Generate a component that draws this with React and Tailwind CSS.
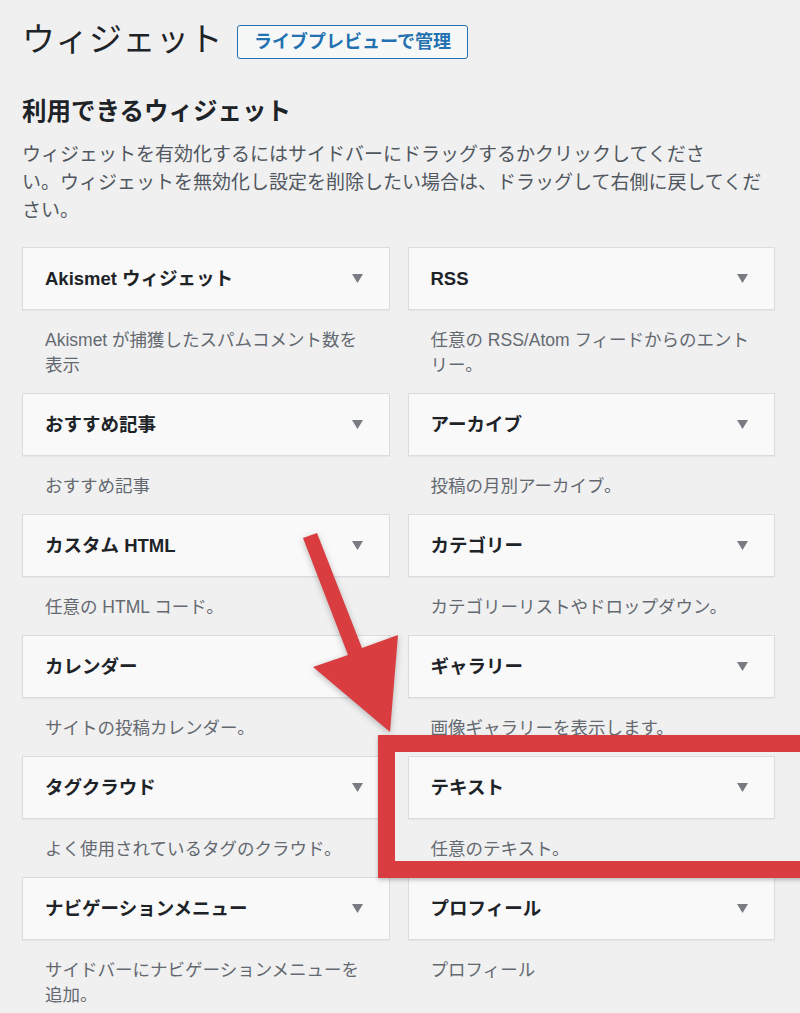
import React from "react";

const widgets = [
  { title: "Akismet ウィジェット", desc: ["Akismet が捕獲したスパムコメント数を", "表示"] },
  { title: "RSS", desc: ["任意の RSS/Atom フィードからのエント", "リー。"] },
  { title: "おすすめ記事", desc: ["おすすめ記事"] },
  { title: "アーカイブ", desc: ["投稿の月別アーカイブ。"] },
  { title: "カスタム HTML", desc: ["任意の HTML コード。"] },
  { title: "カテゴリー", desc: ["カテゴリーリストやドロップダウン。"] },
  { title: "カレンダー", desc: ["サイトの投稿カレンダー。"] },
  { title: "ギャラリー", desc: ["画像ギャラリーを表示します。"] },
  { title: "タグクラウド", desc: ["よく使用されているタグのクラウド。"] },
  { title: "テキスト", desc: ["任意のテキスト。"] },
  { title: "ナビゲーションメニュー", desc: ["サイドバーにナビゲーションメニューを", "追加。"] },
  { title: "プロフィール", desc: ["プロフィール"] },
];

function WidgetItem({ widget }) {
  return (
    <div>
      {/* widget header bar */}
      <div className="flex h-[63px] items-center justify-between border border-[#dcdcde] bg-[#f9f9f9] pl-[22px] pr-[26px] shadow-[0_1px_1px_rgba(0,0,0,0.04)]">
        <span className="text-[18.5px] font-bold text-[#1d2327]">{widget.title}</span>
        <svg width="11" height="9" viewBox="0 0 11 9" className="text-[#787c82]">
          <path d="M0 0 L11 0 L5.5 9 Z" fill="currentColor" />
        </svg>
      </div>
      <p className="mb-[15px] mt-[18px] whitespace-nowrap px-[23px] text-[17.5px] leading-[25px] text-[#646970]">
        {widget.desc.map((line, i) => (
          <React.Fragment key={i}>
            {i > 0 && <br />}
            {line}
          </React.Fragment>
        ))}
      </p>
    </div>
  );
}

export default function App() {
  return (
    <div className="relative h-[1013px] w-[800px] overflow-hidden bg-[#f0f0f1] px-[22px] pt-[20px] font-['Liberation_Sans','Noto_Sans_CJK_JP',sans-serif]">
      {/* page title */}
      <div className="flex items-center gap-[14px]">
        <h1 className="text-[33px] font-normal leading-[40px] tracking-[0.5px] text-[#1d2327]">ウィジェット</h1>
        <button className="mt-[4px] h-[34px] rounded-[3px] border border-[#2271b1] bg-[#f6f7f7] px-[16px] text-[18px] font-bold leading-[32px] text-[#2271b1]">
          ライブプレビューで管理
        </button>
      </div>

      <h2 className="mt-[36px] text-[24.5px] font-bold leading-[32px] text-[#1d2327]">利用できるウィジェット</h2>
      <p className="mt-[13px] whitespace-nowrap text-[19px] leading-[28px] text-[#50575e]">
        ウィジェットを有効化するにはサイドバーにドラッグするかクリックしてくださ
        <br />
        い。ウィジェットを無効化し設定を削除したい場合は、ドラッグして右側に戻してくだ
        <br />
        さい。
      </p>

      {/* available widgets */}
      <div className="mt-[22px] grid w-[753px] grid-cols-2 gap-x-[18px]">
        {widgets.map((w) => (
          <WidgetItem key={w.title} widget={w} />
        ))}
      </div>

      {/* red annotation: arrow */}
      <svg
        className="pointer-events-none absolute left-0 top-0 drop-shadow-[0_2px_3px_rgba(0,0,0,0.25)]"
        width="800"
        height="1013"
      >
        <polygon
          points="303,538 317,533 362,648 398,635 390,732 313,667 348,655"
          fill="#da3d40"
        />
      </svg>
      {/* red annotation: frame around the text widget */}
      <div className="pointer-events-none absolute left-[378px] top-[735px] h-[143px] w-[440px] border-[17px] border-[#da3d40] shadow-[0_2px_4px_rgba(0,0,0,0.25)]" />
    </div>
  );
}
